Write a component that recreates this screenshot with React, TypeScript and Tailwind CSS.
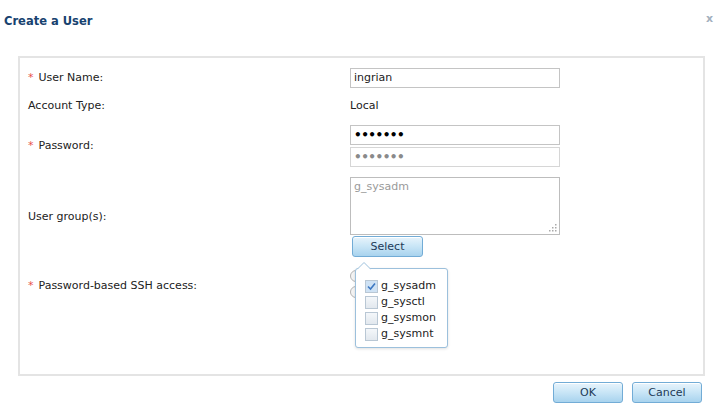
import { FC, ReactNode } from 'react'

const Required: FC<{ children: ReactNode }> = ({ children }) => (
  <span>
    <span className="mr-[5px] text-[#e8504a]">*</span>
    {children}
  </span>
)

const Row: FC<{ label: ReactNode; className?: string; labelClass?: string; children: ReactNode }> = ({
  label,
  className = '',
  labelClass = '',
  children,
}) => (
  <div className={`flex items-center ${className}`}>
    <div className={`w-[330px] shrink-0 pl-[8px] ${labelClass}`}>{label}</div>
    <div className="flex flex-col">{children}</div>
  </div>
)

const BlueButton: FC<{ children: ReactNode; className?: string }> = ({ children, className = '' }) => (
  <button
    className={`flex h-[21px] items-center justify-center rounded-[3px] border border-[#72acd6] bg-gradient-to-b from-[#e8f4fc] via-[#c8e5f6] to-[#a8d3ee] text-[#1d3a57] shadow-[inset_0_1px_0_#ffffff] ${className}`}
  >
    {children}
  </button>
)

const groups = [
  { name: 'g_sysadm', checked: true },
  { name: 'g_sysctl', checked: false },
  { name: 'g_sysmon', checked: false },
  { name: 'g_sysmnt', checked: false },
]

export default function App() {
  return (
    <div className="relative h-[404px] w-[717px] overflow-hidden bg-white font-['DejaVu_Sans',Verdana,sans-serif] text-[11px] leading-[14px] text-[#222]">
      <div className="flex h-[56px] items-start justify-between pl-[4px] pr-[4px] pt-[14px]">
        <div className="text-[11.5px] font-bold text-[#17426f]">Create a User</div>
        <div className="mt-[-2px] text-[11px] font-bold text-[#a3b0be]">x</div>
      </div>

      <div className="ml-[18px] h-[320px] w-[687px] border-2 border-[#e4e4e4]">
        <Row label={<Required>User Name:</Required>} className="mt-[10px] h-[20px]">
          <div className="flex h-[20px] w-[210px] items-center border border-[#c4c4c4] pl-[3px]">ingrian</div>
        </Row>

        <Row label="Account Type:" className="mt-[8px] h-[20px]">
          <div>Local</div>
        </Row>

        <Row label={<Required>Password:</Required>} className="mt-[9px]">
          <div className="flex h-[20px] w-[210px] items-center border border-[#c4c4c4] pl-[3px] text-[12px] font-bold tracking-[-0.5px] text-black">
            •••••••
          </div>
          <div className="mt-[2px] flex h-[20px] w-[210px] items-center border border-[#d6d6d6] pl-[3px] text-[12px] font-bold tracking-[-0.5px] text-[#8a8a8a]">
            •••••••
          </div>
        </Row>

        <Row label="User group(s):" className="mt-[10px]">
          <div className="relative h-[58px] w-[210px] border border-[#bdbdbd] pl-[3px] pt-[2px] text-[#9a9a9a]">
            g_sysadm
            <svg className="absolute bottom-[2px] right-[2px]" width="8" height="8" viewBox="0 0 8 8">
              <rect x="6" y="0" width="1.5" height="1.5" fill="#aaa" />
              <rect x="3" y="3" width="1.5" height="1.5" fill="#aaa" />
              <rect x="6" y="3" width="1.5" height="1.5" fill="#aaa" />
              <rect x="0" y="6" width="1.5" height="1.5" fill="#aaa" />
              <rect x="3" y="6" width="1.5" height="1.5" fill="#aaa" />
              <rect x="6" y="6" width="1.5" height="1.5" fill="#aaa" />
            </svg>
          </div>
          <BlueButton className="ml-[2px] mt-[1px] w-[71px]">Select</BlueButton>
        </Row>

        <Row label={<Required>Password-based SSH access:</Required>} className="mt-[11px]" labelClass="pt-[3px]">
          <div className="flex h-[16px] items-center gap-[4px]">
            <span className="h-[12px] w-[12px] rounded-full border border-[#b4b4b4] bg-[#f4f4f4]" />
            <span>Yes</span>
          </div>
          <div className="flex h-[16px] items-center gap-[4px]">
            <span className="h-[12px] w-[12px] rounded-full border border-[#b4b4b4] bg-[#f4f4f4]" />
            <span>No</span>
          </div>
        </Row>
      </div>

      <div className="mt-[6px] flex justify-end gap-[9px] pr-[15px]">
        <BlueButton className="w-[70px]">OK</BlueButton>
        <BlueButton className="w-[70px]">Cancel</BlueButton>
      </div>

      {/* group picker popup */}
      <div className="absolute left-[355px] top-[268px] h-[80px] w-[93px] rounded-[3px] border border-[#9cc0dc] bg-white pl-[9px] pt-[9px] shadow-[0_1px_3px_rgba(0,0,0,0.12)]">
        <svg className="absolute left-[1px] top-[-7px]" width="14" height="8" viewBox="0 0 14 8">
          <path d="M0 7.5 L7 0.5 L14 7.5" fill="white" stroke="#9cc0dc" strokeWidth="1" />
          <rect x="0.5" y="7" width="13" height="2" fill="white" />
        </svg>
        {groups.map((g) => (
          <div key={g.name} className="flex h-[16px] items-center gap-[3px]">
            <span className="flex h-[13px] w-[13px] items-center justify-center border border-[#b9c7d4] bg-gradient-to-b from-[#f4f7fa] to-[#e2e8ee]">
              {g.checked && (
                <svg width="11" height="11" viewBox="0 0 11 11">
                  <rect x="0" y="0" width="11" height="11" fill="#cfe2f4" />
                  <path d="M2 5.5 L4.5 8 L9 2.5" fill="none" stroke="#3d78c2" strokeWidth="1.6" />
                </svg>
              )}
            </span>
            <span className="text-[#222]">{g.name}</span>
          </div>
        ))}
      </div>
    </div>
  )
}
